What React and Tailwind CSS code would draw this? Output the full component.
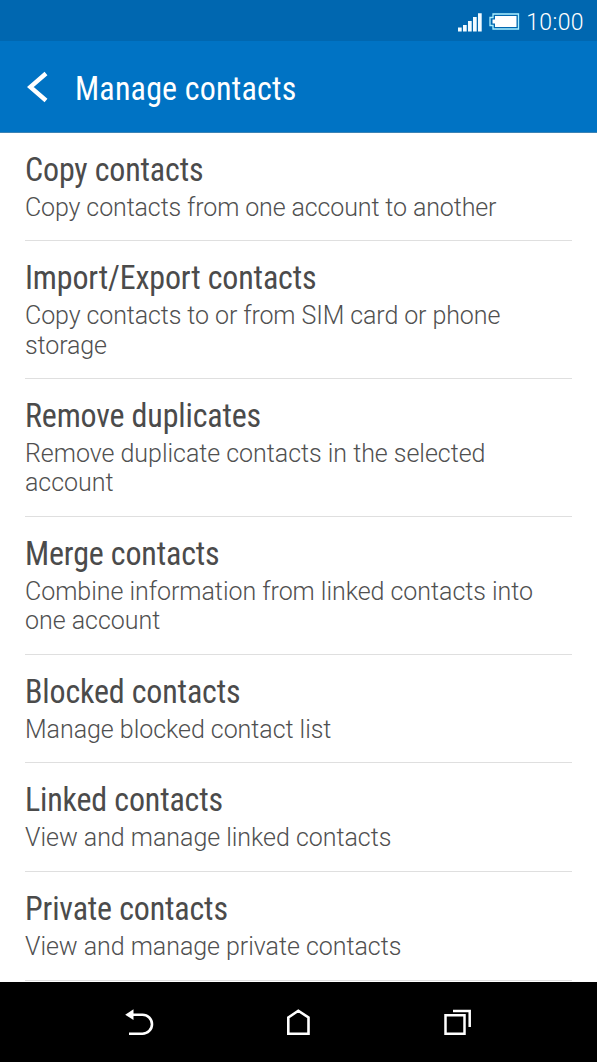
const items = [
  ['Copy contacts', ['Copy contacts from one account to another'], 'tracking-[-0.12px]'],
  ['Import/Export contacts', ['Copy contacts to or from SIM card or phone', 'storage'], 'tracking-[-0.1px]'],
  ['Remove duplicates', ['Remove duplicate contacts in the selected', 'account'], 'tracking-[-0.03px]'],
  ['Merge contacts', ['Combine information from linked contacts into', 'one account'], 'tracking-[-0.03px]'],
  ['Blocked contacts', ['Manage blocked contact list'], 'tracking-[-0.04px]'],
  ['Linked contacts', ['View and manage linked contacts'], 'tracking-[-0.03px]'],
  ['Private contacts', ['View and manage private contacts'], 'tracking-[-0.04px]'],
];

function StatusBar() {
  return (
    <div className="flex h-[41px] shrink-0 items-center justify-end bg-[#0067b0] pr-[13px] text-white">
      <svg className="mt-[2px] h-[20px] w-[24px]" viewBox="0 0 24 20" fill="#f2fbff">
        <path d="M0 15.5h3.700V19.500H0zM5 13h3.700v6.500H5zM10 9h3.700v10.500h-3.700zM15 5h3.700v14.500h-3.700zM20 1.200h3.700v18.300h-3.700z" />
      </svg>
      <svg className="ml-[7px] mt-[1px] h-[17px] w-[31px]" viewBox="0 0 31 17">
        <path d="M4 1H29.500V16H4V12.500H1V4.500H4Z" fill="none" stroke="#a9efff" strokeWidth="1.3" />
        <path d="M6 3H27.500V14H6V10.500H3.500V6.500H6Z" fill="#fff" />
      </svg>
      <span className="ml-[6px] mt-[3px] text-[23px] font-light leading-none tracking-[0.4px]">10:00</span>
    </div>
  );
}

export default function App() {
  return (
    <div className="flex h-[1062px] w-[597px] flex-col overflow-hidden bg-white font-['Roboto',sans-serif]">
      <StatusBar />
      <header className="flex h-[92px] shrink-0 items-center border-b border-[#3c83b5] bg-[#0073c4] text-white">
        <svg className="ml-[27px] h-[32px] w-[21px]" viewBox="0 0 21 32" fill="none" stroke="#fff" strokeWidth="4.400">
          <path d="M19 2.500L3.300 16L19 29.500" />
        </svg>
        <h1 className="ml-[27px] mt-[5px] origin-[0_30px] scale-y-[1.02] whitespace-nowrap text-[32px] font-normal leading-[38px] tracking-[0.2px] [font-stretch:75%]">Manage contacts</h1>
      </header>
      <main className="flex min-h-0 flex-1 flex-col overflow-hidden px-[25px]">
        {items.map(([title, lines, tracking]) => (
          <section key={title} className="shrink-0 border-b border-[#dfdfdf] pt-[18.100px] pb-[18.200px] first:pt-[17.500px] first:pb-[18.400px]">
            <h2 className="origin-[0_30px] scale-y-[1.04] whitespace-nowrap text-[32px] font-normal leading-[38px] tracking-[-0.16px] text-[#4b4b4b] [font-stretch:75%]">{title}</h2>
            <div className={`mt-[4px] text-[25px] font-light leading-[29.300px] text-[#505050] ${tracking}`}>
              {lines.map((l) => <p key={l} className="whitespace-nowrap">{l}</p>)}
            </div>
          </section>
        ))}
      </main>
      <nav className="flex h-[80px] shrink-0 items-center bg-black">
        <svg className="ml-[124px] h-[28px] w-[32px]" viewBox="0 0 32 28" fill="none" stroke="#fff" strokeWidth="2.6">
          <path d="M8 6.700H18.500A9.500 9.500 0 0 1 18.500 25.700H5" />
          <path d="M1.200 6.700L9.500 1.200V12Z" fill="#fff" stroke="none" />
        </svg>
        <svg className="ml-[130px] h-[28px] w-[26px]" viewBox="0 0 26 28" fill="none" stroke="#fff" strokeWidth="2.6">
          <path d="M2.300 9.500L12.300 2.700L22.500 9.500V25.700H2.300Z" />
        </svg>
        <svg className="ml-[131px] h-[28px] w-[30px]" viewBox="0 0 30 28" fill="none" stroke="#fff" strokeWidth="2.5">
          <path d="M2.500 7.200H21.500V25.700H2.500ZM10 3H26.700V19" />
        </svg>
      </nav>
    </div>
  );
}
